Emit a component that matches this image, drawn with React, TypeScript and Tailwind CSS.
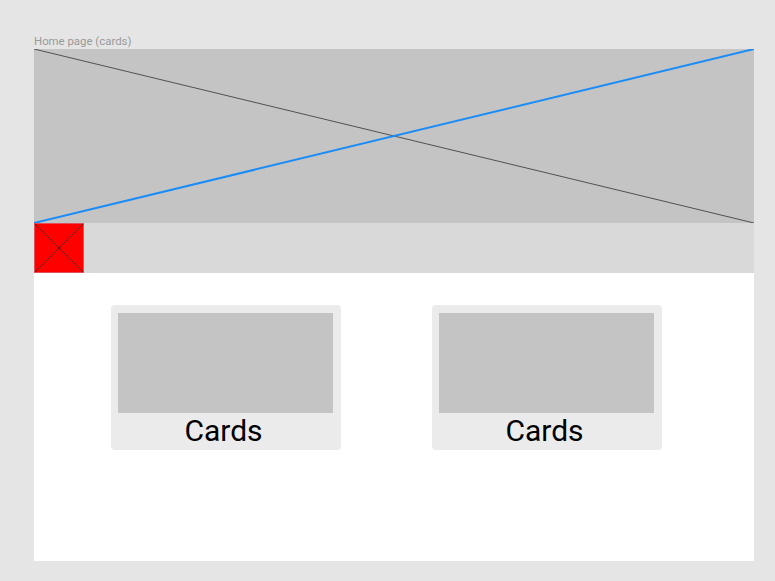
import React from "react";

function Card() {
  return (
    <div className="w-[230px] h-[145px] bg-[#ebebeb] rounded-[4px] pt-[8px] pl-[7px] flex flex-col">
      <div className="w-[215px] h-[100px] bg-[#c4c4c4]" />
      <div className="w-[211px] text-center text-black text-[30px] leading-[34px] mt-[1px]" style={{ fontFamily: "Roboto, sans-serif" }}>
        Cards
      </div>
    </div>
  );
}

export default function App() {
  return (
    <div className="w-[775px] h-[581px] bg-[#e5e5e5] pl-[34px] pt-[34px]" style={{ fontFamily: "Roboto, sans-serif" }}>
      <div className="text-[11.4px] leading-[14px] text-[#999999] h-[15px]">Home page (cards)</div>
      <div className="w-[720px] h-[512px] bg-white flex flex-col">
        <div className="relative h-[174px] bg-[#c4c4c4]">
          <svg className="absolute inset-0" width="720" height="174" viewBox="0 0 720 174" preserveAspectRatio="none">
            <line x1="0" y1="0" x2="720" y2="174" stroke="#333" strokeWidth="0.8" />
            <line x1="0" y1="174" x2="720" y2="0" stroke="#1a8cf7" strokeWidth="2" />
          </svg>
        </div>
        <div className="h-[50px] bg-[#d9d9d9] flex">
          <div className="relative w-[50px] h-[50px] bg-[#ff0000] border border-[#e0505a]">
            <svg className="absolute inset-0" width="48" height="48" viewBox="0 0 48 48">
              <line x1="0" y1="0" x2="48" y2="48" stroke="#3a0000" strokeWidth="0.8" />
              <line x1="0" y1="48" x2="48" y2="0" stroke="#3a0000" strokeWidth="0.8" />
            </svg>
          </div>
        </div>
        <div className="flex pt-[32px] pl-[77px] gap-[91px]">
          <Card />
          <Card />
        </div>
      </div>
    </div>
  );
}
